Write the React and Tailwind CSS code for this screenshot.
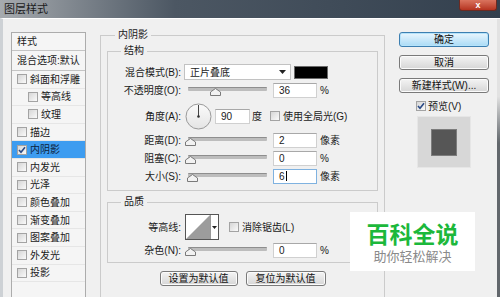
import React from 'react'

const font = { fontFamily: '"Liberation Sans", "Noto Sans CJK SC", sans-serif' }

function Check({ checked }) {
  return (
    <span className="w-[10px] h-[10px] shrink-0 border border-[#a3a3a3] bg-linear-to-br from-[#d6d6d6] to-[#fafafa] flex items-center justify-center">
      {checked && (
        <svg width="8" height="8" viewBox="0 0 8 8">
          <path d="M1 4 L3 6.2 L7 1.2" fill="none" stroke="#2a4a86" strokeWidth="1.6" />
        </svg>
      )}
    </span>
  )
}

function Slider({ pos }) {
  return (
    <div className="relative w-[88px] h-[16px] ml-[3px] shrink-0">
      <div className="absolute left-[4px] right-[5px] top-[5px] h-[4px] rounded-[1px] bg-[#bdbdbd] border-t border-[#8e8e8e]" />
      <svg className="absolute top-[6px]" style={{ left: pos }} width="11" height="8" viewBox="0 0 11 8">
        <path d="M0.5 7.5 L0.5 4 L5.5 0.5 L10.5 4 L10.5 7.5 Z" fill="#f2f2f2" stroke="#7a7a7a" />
      </svg>
    </div>
  )
}

function Field({ value, w = 'w-[44px]', focus, className = '' }) {
  return (
    <div
      className={`${w} h-[15px] shrink-0 bg-white border flex items-center pl-[5px] text-[10px] ${
        focus ? 'border-[#7fb2e0]' : 'border-[#d0d0d0] border-t-[#a8a8a8]'
      } ${className}`}
    >
      {value}
      {focus && <span className="w-px h-[10px] bg-black ml-px" />}
    </div>
  )
}

function Label({ children }) {
  return <span className="w-[73px] shrink-0 text-right text-[10px] text-[#1a1a1a]">{children}</span>
}

function SliderRow({ label, pos, value, unit, focus }) {
  return (
    <div className="h-[16px] flex items-center mt-[2px]">
      <Label>{label}</Label>
      <Slider pos={pos} />
      <Field value={value} focus={focus} className="ml-[1px]" />
      <span className="ml-[3px] text-[10px]">{unit}</span>
    </div>
  )
}

function Btn({ children, primary, w = 'w-full' }) {
  return (
    <div
      className={`${w} h-[15px] rounded-[3px] border flex items-center justify-center text-[10px] text-[#111] ${
        primary
          ? 'border-[#3c7fb1] bg-linear-to-b from-[#eaf6fd] to-[#a9dbf6] shadow-[inset_0_0_0_1px_#b6e3fa]'
          : 'border-[#7a7a7a] bg-linear-to-b from-[#f4f4f4] to-[#d6d6d6] shadow-[inset_0_0_0_1px_#fbfbfb]'
      }`}
    >
      {children}
    </div>
  )
}

const items = [
  { t: '斜面和浮雕' },
  { t: '等高线', sub: true },
  { t: '纹理', sub: true },
  { t: '描边' },
  { t: '内阴影', on: true },
  { t: '内发光' },
  { t: '光泽' },
  { t: '颜色叠加' },
  { t: '渐变叠加' },
  { t: '图案叠加' },
  { t: '外发光' },
  { t: '投影' },
]

export default function App() {
  return (
    <div className="w-[500px] h-[297px] overflow-hidden relative flex flex-col bg-[#f0f0f0] text-[#1a1a1a]" style={font}>
      {/* title bar */}
      <div className="h-[18px] shrink-0 flex items-start justify-between bg-linear-to-r from-[#a7abaf] via-[#4c5763] via-35% to-[#33404e]">
        <span className="text-[11px] leading-[18px] pl-[4px] text-[#1c1c1c]">图层样式</span>
        <div className="w-[38px] h-[11px] mr-[3px] rounded-b-[3px] border border-t-0 border-[#6b2a22] bg-linear-to-b from-[#d9735e] to-[#b5321f] flex items-center justify-center text-white text-[9px] font-bold leading-none">
          x
        </div>
      </div>

      {/* body */}
      <div className="flex-1 flex border-t border-white border-l-[3px] border-l-[#cdd1d5]">
        <div className="flex-1 flex pt-[10px]">
          {/* left list */}
          <div className="ml-[8px] mt-[3px] w-[75px] h-[280px] shrink-0 border border-[#acacac] bg-[#f5f5f5] text-[10px]">
            <div className="h-[18px] flex items-center pl-[5px] border-b border-[#c4c4c4]">样式</div>
            <div className="h-[20px] flex items-center pl-[5px] border-b border-[#c4c4c4] whitespace-nowrap">混合选项:默认</div>
            {items.map((it) => (
              <div
                key={it.t}
                className={`h-[17.6px] flex items-center gap-[3px] border-b border-[#e6e6e6] ${it.sub ? 'pl-[16px]' : 'pl-[5px]'} ${
                  it.on ? 'bg-[#3d9cf0] text-[#0d1f3a]' : ''
                }`}
              >
                <Check checked={it.on} />
                <span>{it.t}</span>
              </div>
            ))}
          </div>

          {/* main group */}
          <div className="ml-[14px] w-[285px] shrink-0">
            <fieldset className="border border-[#cbcbcb] px-[6px] h-[300px]">
              <legend className="ml-[8px] px-[3px] text-[10px] leading-[12px]">内阴影</legend>

              <fieldset className="mt-[4px] border border-[#cbcbcb] pt-[7px] pb-[6px]">
                <legend className="ml-[13px] px-[3px] text-[10px] leading-[12px]">结构</legend>

                <div className="h-[16px] flex items-center">
                  <Label>混合模式(B):</Label>
                  <div className="ml-[3px] w-[107px] h-[16px] bg-white border border-[#c2c2c2] flex items-center justify-between pl-[5px] pr-[4px] text-[10px]">
                    <span>正片叠底</span>
                    <svg width="7" height="4" viewBox="0 0 7 4">
                      <path d="M0 0 H7 L3.5 4 Z" fill="#222" />
                    </svg>
                  </div>
                  <div className="ml-[3px] w-[34px] h-[13px] bg-black border border-[#6a6a6a]" />
                </div>

                <SliderRow label="不透明度(O):" pos={26} value="36" unit="%" />

                <div className="h-[28px] flex items-center mt-[4px]">
                  <Label>角度(A):</Label>
                  <svg className="ml-[4px] shrink-0" width="27" height="27" viewBox="0 0 27 27">
                    <defs>
                      <linearGradient id="dial" x1="0" y1="0" x2="0" y2="1">
                        <stop offset="0" stopColor="#fbfbfb" />
                        <stop offset="1" stopColor="#e4e4e4" />
                      </linearGradient>
                    </defs>
                    <circle cx="13.5" cy="13.5" r="12.5" fill="url(#dial)" stroke="#9a9a9a" />
                    <line x1="13.5" y1="13.5" x2="13.5" y2="2" stroke="#444" strokeWidth="1" />
                    <circle cx="13.5" cy="13.5" r="1.3" fill="#333" />
                  </svg>
                  <Field value="90" w="w-[35px]" className="ml-[3px]" />
                  <span className="ml-[2px] text-[10px]">度</span>
                  <span className="ml-[8px]">
                    <Check />
                  </span>
                  <span className="ml-[3px] text-[10px]">使用全局光(G)</span>
                </div>

                <SliderRow label="距离(D):" pos={1} value="2" unit="像素" />
                <SliderRow label="阻塞(C):" pos={1} value="0" unit="%" />
                <SliderRow label="大小(S):" pos={3} value="6" unit="像素" focus />
              </fieldset>

              <fieldset className="mt-[5px] border border-[#cbcbcb] pt-[6px] pb-[4px]">
                <legend className="ml-[13px] px-[3px] text-[10px] leading-[12px]">品质</legend>

                <div className="h-[26px] flex items-center">
                  <Label>等高线:</Label>
                  <div className="ml-[4px] flex border border-[#555] bg-white">
                    <svg width="24" height="24" viewBox="0 0 24 24">
                      <path d="M0 24 L24 0 L24 24 Z" fill="#9c9c9c" />
                    </svg>
                    <div className="w-[8px] border-l border-[#999] flex items-center justify-center">
                      <svg width="5" height="3" viewBox="0 0 5 3">
                        <path d="M0 0 H5 L2.5 3 Z" fill="#222" />
                      </svg>
                    </div>
                  </div>
                  <span className="ml-[10px]">
                    <Check />
                  </span>
                  <span className="ml-[3px] text-[10px]">消除锯齿(L)</span>
                </div>

                <SliderRow label="杂色(N):" pos={1} value="0" unit="%" />
              </fieldset>

              <div className="mt-[8px] flex justify-center gap-[8px]">
                <Btn w="w-[78px]">设置为默认值</Btn>
                <Btn w="w-[80px]">复位为默认值</Btn>
              </div>
            </fieldset>
          </div>

          {/* right column */}
          <div className="ml-[14px] mt-[3px] w-[90px] shrink-0 flex flex-col">
            <div className="flex flex-col gap-[8px]">
              <Btn primary>确定</Btn>
              <Btn>取消</Btn>
              <Btn>新建样式(W)...</Btn>
            </div>
            <div className="mt-[7px] h-[12px] flex items-center gap-[2px] pl-[17px] text-[10px]">
              <Check checked />
              <span>预览(V)</span>
            </div>
            <div className="mt-[4px] ml-[18px] w-[54px] h-[52px] bg-[#d7d7d7] border border-[#e6e6e6] flex items-center justify-center">
              <div className="w-[26px] h-[27px] bg-[#565656] border border-[#7c7c7c]" />
            </div>
          </div>
        </div>
        <div className="w-[3px] shrink-0 bg-linear-to-b from-[#e2e2e2] from-25% to-[#62676c] to-40%" />
      </div>

      {/* watermark */}
      <div className="absolute left-[350px] top-[212px] w-[125px] h-[59px] bg-white flex flex-col items-center justify-center">
        <span className="text-[23px] leading-[26px] font-bold text-[#1cb83b]" style={{ fontFamily: '"Noto Sans CJK SC", sans-serif' }}>
          百科全说
        </span>
        <span className="text-[13px] leading-[16px] text-[#8a8a8a] mt-[2px]" style={{ fontFamily: '"Noto Sans CJK SC", sans-serif' }}>
          助你轻松解决
        </span>
      </div>
    </div>
  )
}
